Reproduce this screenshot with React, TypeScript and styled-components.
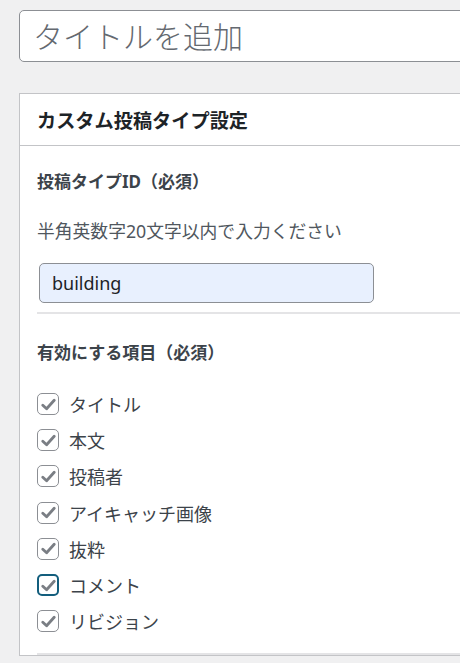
import React from 'react'
import styled, {createGlobalStyle} from "styled-components";

const GlobalStyle = createGlobalStyle`
  html, body {
    margin: 0;
    padding: 0;
    background: #f0f0f1;
    overflow: hidden;
  }
  body {
    font-family: "Noto Sans", "Noto Sans CJK JP", sans-serif;
    color: #3c434a;
  }
`

const Page = styled.div`
  width: 500px;
  padding: 10px 0 0 19px;
`

const TitleInput = styled.input`
  display: block;
  box-sizing: border-box;
  width: 100%;
  height: 52px;
  margin: 0;
  padding: 0 13px;
  border: 1px solid #8c8f94;
  border-radius: 5px;
  background: #fff;
  font-family: inherit;
  font-size: 30px;
  font-weight: 300;
  color: #1d2327;
  outline: none;

  &::placeholder {
    color: #646970;
  }
`

const Panel = styled.section`
  margin-top: 31px;
  background: #fff;
  border: 1px solid #c3c4c7;
`

const PanelHeader = styled.h2`
  display: flex;
  align-items: center;
  height: 51px;
  margin: 0;
  padding: 0 17px;
  border-bottom: 1px solid #c3c4c7;
  font-size: 19.2px;
  font-weight: 700;
  color: #1d2327;
`

const PanelBody = styled.div`
  padding-left: 17px;
`

const Section = styled.div<{ $bottom: number }>`
  padding-bottom: ${p => p.$bottom}px;
  border-bottom: 2px solid #e4e4e6;
`

const FieldTitle = styled.h3<{ $top: number }>`
  margin: ${p => p.$top}px 0 0;
  font-size: 17px;
  line-height: 24px;
  font-weight: 700;
  color: #3c434a;
`

const Description = styled.p`
  margin: 24px 0 0;
  font-size: 17.8px;
  line-height: 26px;
  color: #50575e;
`

const TextInput = styled.input`
  display: block;
  box-sizing: border-box;
  width: 335px;
  height: 40px;
  margin: 19px 0 0 2px;
  padding: 0 12px;
  border: 1px solid #8c8f94;
  border-radius: 5px;
  background: #e8f0fe;
  font-family: inherit;
  font-size: 18px;
  color: #1d2327;
  outline: none;
`

const CheckList = styled.ul`
  list-style: none;
  margin: 21px 0 0;
  padding: 0;
`

const CheckRow = styled.li`
  display: flex;
  align-items: center;
  gap: 10px;
  height: 36.2px;
  font-size: 18px;
  color: #3c434a;
`

const Box = styled.span<{ $focused?: boolean }>`
  box-sizing: border-box;
  display: flex;
  align-items: center;
  justify-content: center;
  width: 22px;
  height: 22px;
  border: ${p => p.$focused ? '2px solid #135e7d' : '1px solid #8c8f94'};
  border-radius: 5px;
  background: #fff;
`

const items = ['タイトル', '本文', '投稿者', 'アイキャッチ画像', '抜粋', 'コメント', 'リビジョン']

const Check = () => (
  <svg width="15" height="13" viewBox="0 0 15 13">
    <path d="M1.8 7.2 L5.6 10.8 L13.2 2.2" fill="none" stroke="#7a7e84" strokeWidth="2.8"
          strokeLinecap="round" strokeLinejoin="round"/>
  </svg>
)

export default function App() {
  return <>
    <GlobalStyle/>
    <Page>
      <TitleInput placeholder="タイトルを追加"/>
      <Panel>
        <PanelHeader>カスタム投稿タイプ設定</PanelHeader>
        <PanelBody>
          <Section $bottom={9}>
            <FieldTitle $top={24}>投稿タイプID（必須）</FieldTitle>
            <Description>半角英数字20文字以内で入力ください</Description>
            <TextInput defaultValue="building"/>
          </Section>
          <Section $bottom={14}>
            <FieldTitle $top={27}>有効にする項目（必須）</FieldTitle>
            <CheckList>
              {items.map(label =>
                <CheckRow key={label}>
                  <Box $focused={label === 'コメント'}><Check/></Box>
                  {label}
                </CheckRow>
              )}
            </CheckList>
          </Section>
        </PanelBody>
      </Panel>
    </Page>
  </>
}
